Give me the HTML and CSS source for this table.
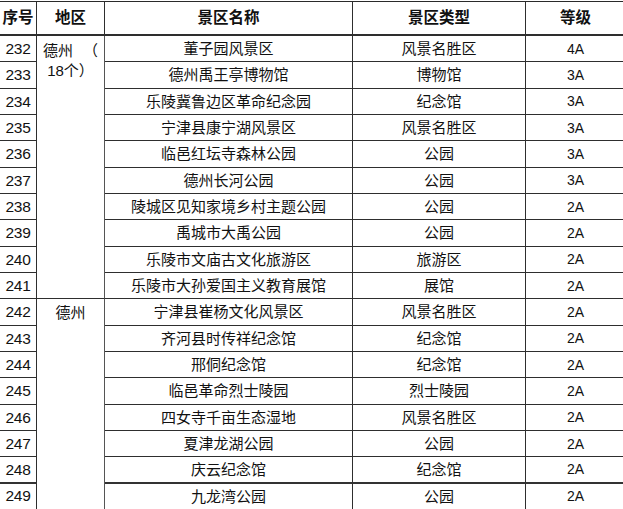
FILE: index.html
```html
<!DOCTYPE html>
<html lang="zh-CN">
<head>
<meta charset="utf-8">
<title>景区名录</title>
<link rel="stylesheet" href="styles.css">
</head>
<body>
<div class="sheet">
  <div class="cell head">序号</div>
  <div class="cell head">地区</div>
  <div class="cell head">景区名称</div>
  <div class="cell head">景区类型</div>
  <div class="cell head">等级</div>

  <div class="cell num">232</div>
  <div class="cell region region-a"><span class="l1"><span>德州</span><span>（</span></span><span class="l2">18个）</span></div>
  <div class="cell">董子园风景区</div><div class="cell">风景名胜区</div><div class="cell grade">4A</div>

  <div class="cell num">233</div><div class="cell">德州禹王亭博物馆</div><div class="cell">博物馆</div><div class="cell grade">3A</div>
  <div class="cell num">234</div><div class="cell">乐陵冀鲁边区革命纪念园</div><div class="cell">纪念馆</div><div class="cell grade">3A</div>
  <div class="cell num">235</div><div class="cell">宁津县康宁湖风景区</div><div class="cell">风景名胜区</div><div class="cell grade">3A</div>
  <div class="cell num">236</div><div class="cell">临邑红坛寺森林公园</div><div class="cell">公园</div><div class="cell grade">3A</div>
  <div class="cell num">237</div><div class="cell">德州长河公园</div><div class="cell">公园</div><div class="cell grade">3A</div>
  <div class="cell num">238</div><div class="cell">陵城区见知家境乡村主题公园</div><div class="cell">公园</div><div class="cell grade">2A</div>
  <div class="cell num">239</div><div class="cell">禹城市大禹公园</div><div class="cell">公园</div><div class="cell grade">2A</div>
  <div class="cell num">240</div><div class="cell">乐陵市文庙古文化旅游区</div><div class="cell">旅游区</div><div class="cell grade">2A</div>
  <div class="cell num">241</div><div class="cell">乐陵市大孙爱国主义教育展馆</div><div class="cell">展馆</div><div class="cell grade">2A</div>

  <div class="cell num">242</div>
  <div class="cell region region-b">德州</div>
  <div class="cell">宁津县崔杨文化风景区</div><div class="cell">风景名胜区</div><div class="cell grade">2A</div>
  <div class="cell num">243</div><div class="cell">齐河县时传祥纪念馆</div><div class="cell">纪念馆</div><div class="cell grade">2A</div>
  <div class="cell num">244</div><div class="cell">邢侗纪念馆</div><div class="cell">纪念馆</div><div class="cell grade">2A</div>
  <div class="cell num">245</div><div class="cell">临邑革命烈士陵园</div><div class="cell">烈士陵园</div><div class="cell grade">2A</div>
  <div class="cell num">246</div><div class="cell">四女寺千亩生态湿地</div><div class="cell">风景名胜区</div><div class="cell grade">2A</div>
  <div class="cell num">247</div><div class="cell">夏津龙湖公园</div><div class="cell">公园</div><div class="cell grade">2A</div>
  <div class="cell num thick">248</div><div class="cell thick">庆云纪念馆</div><div class="cell thick">纪念馆</div><div class="cell grade thick">2A</div>
  <div class="cell num">249</div><div class="cell">九龙湾公园</div><div class="cell">公园</div><div class="cell grade">2A</div>
</div>
</body>
</html>
```

FILE: styles.css
```css
html, body {
  margin: 0;
  padding: 0;
  background: #fff;
}

body {
  width: 623px;
  height: 509px;
  overflow: hidden;
  font-family: "Liberation Sans", "Noto Sans CJK SC", sans-serif;
  color: #111;
}

.sheet {
  margin-top: 1px;
  border-top: 1px solid #2a2a2a;
  display: grid;
  grid-template-columns: 37px 68px 248px 173px 100px;
  grid-template-rows: 34px repeat(18, 26.33px);
  width: 626px;
}

.cell {
  box-sizing: border-box;
  border-right: 1px solid #2e2e2e;
  border-bottom: 1px solid #2e2e2e;
  display: flex;
  align-items: center;
  justify-content: center;
  font-size: 15px;
  line-height: 1;
  white-space: nowrap;
  overflow: hidden;
}

.thick {
  border-bottom: 2px solid #333;
}

.head {
  font-weight: bold;
  font-size: 15.5px;
  border-bottom: 2px solid #2e2e2e;
}

.num {
  font-size: 15.5px;
  letter-spacing: -0.3px;
}

.grade {
  font-size: 14px;
}

.region {
  grid-row: span 10;
  align-items: stretch;
  justify-content: flex-start;
  flex-direction: column;
  font-size: 15px;
  border-right-color: #555;
}

.region-a {
  padding: 5px 6px 0 6px;
}

.region-a .l1 {
  display: flex;
  justify-content: space-between;
  line-height: 20px;
}

.region-a .l2 {
  text-align: center;
  line-height: 20px;
}

.region-b {
  grid-row: span 8;
  align-items: center;
  padding-top: 6px;
  border-bottom: none;
}
```
